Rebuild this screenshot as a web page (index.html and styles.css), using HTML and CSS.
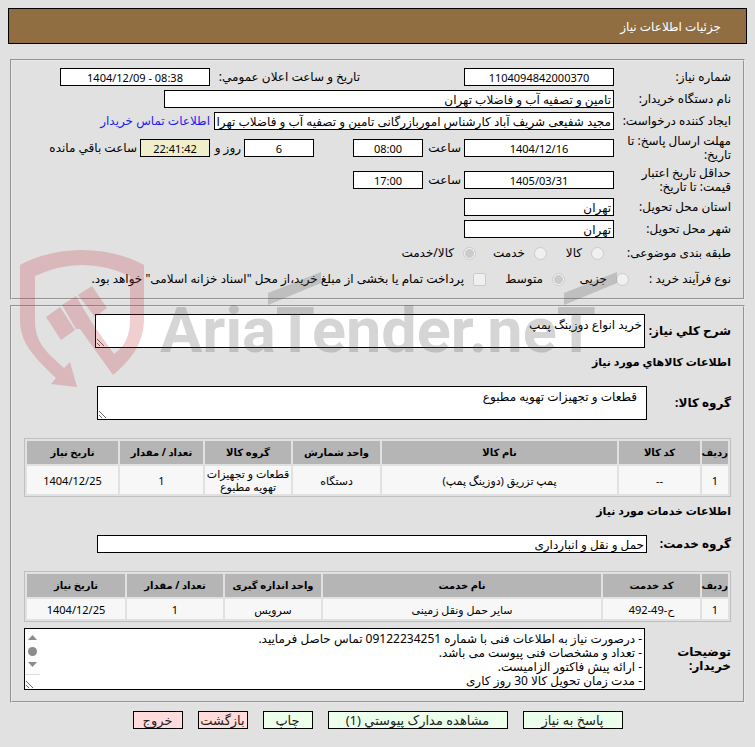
FILE: index.html
```html
<!DOCTYPE html>
<html lang="fa" dir="rtl">
<head>
<meta charset="utf-8">
<title>جزئیات اطلاعات نیاز</title>
<link rel="stylesheet" href="styles.css">
</head>
<body>
<header class="title-bar">جزئیات اطلاعات نیاز</header>
<form>
<fieldset class="panel">
  <div class="row">
    <label class="label" for="num">شماره نیاز:</label>
    <input class="field mid" id="num" value="1104094842000370" readonly>
    <label class="label second" for="announce">تاریخ و ساعت اعلان عمومي:</label>
    <input class="field mid" id="announce" value="1404/12/09 - 08:38" dir="ltr" readonly>
  </div>
  <div class="row">
    <label class="label" for="org">نام دستگاه خریدار:</label>
    <input class="field org" id="org" value="تامین و تصفیه آب و فاضلاب تهران" readonly>
  </div>
  <div class="row">
    <label class="label" for="creator">ایجاد کننده درخواست:</label>
    <input class="field creator" id="creator" value="مجید شفیعی شریف آباد کارشناس اموربازرگانی تامین و تصفیه آب و فاضلاب تهران" readonly>
    <a class="contact" href="#contact">اطلاعات تماس خریدار</a>
  </div>
  <div class="row tall">
    <label class="label" for="deadline">مهلت ارسال پاسخ: تا تاریخ:</label>
    <input class="field mid" id="deadline" value="1404/12/16" readonly>
    <label class="unit hour" for="dhour">ساعت</label>
    <input class="field short" id="dhour" value="08:00" readonly>
    <input class="field short days" id="days" value="6" readonly>
    <label class="unit day" for="days">روز و</label>
    <input class="field short timer" id="timer" value="22:41:42" readonly>
    <label class="unit" for="timer">ساعت باقي مانده</label>
  </div>
  <div class="row tall">
    <label class="label" for="valid">حداقل تاریخ اعتبار قیمت: تا تاریخ:</label>
    <input class="field mid" id="valid" value="1405/03/31" readonly>
    <label class="unit hour" for="vhour">ساعت</label>
    <input class="field short" id="vhour" value="17:00" readonly>
  </div>
  <div class="row">
    <label class="label" for="province">استان محل تحویل:</label>
    <input class="field place" id="province" value="تهران" readonly>
  </div>
  <div class="row">
    <label class="label" for="city">شهر محل تحویل:</label>
    <input class="field place" id="city" value="تهران" readonly>
  </div>
  <div class="row options subject">
    <span class="caption">طبقه بندی موضوعی:</span>
    <label class="option"><input type="radio" name="subject" disabled>کالا</label>
    <label class="option"><input type="radio" name="subject" disabled>خدمت</label>
    <label class="option"><input type="radio" name="subject" checked disabled>کالا/خدمت</label>
  </div>
  <div class="row options process">
    <span class="caption">نوع فرآیند خرید :</span>
    <label class="option"><input type="radio" name="process" disabled>جزیی</label>
    <label class="option"><input type="radio" name="process" checked disabled>متوسط</label>
    <label class="option"><input type="checkbox" disabled>پرداخت تمام یا بخشی از مبلغ خرید،از محل "اسناد خزانه اسلامی" خواهد بود.</label>
  </div>
</fieldset>

<fieldset class="panel details">
  <div class="block">
    <label class="strong" for="desc">شرح کلي نیاز:</label>
    <textarea class="area" id="desc" readonly>خرید انواع دوزینگ پمپ</textarea>
  </div>
  <h2 class="strong heading">اطلاعات کالاهاي مورد نیاز</h2>
  <div class="block group">
    <label class="strong" for="goods">گروه کالا:</label>
    <textarea class="area inset" id="goods" readonly>قطعات و تجهیزات تهویه مطبوع</textarea>
  </div>
  <table class="grid">
    <colgroup><col class="c-row"><col class="c-code"><col><col class="c-unit"><col class="c-group"><col class="c-count"><col class="c-date"></colgroup>
    <thead><tr><th>ردیف</th><th>کد کالا</th><th>نام کالا</th><th>واحد شمارش</th><th>گروه کالا</th><th>تعداد / مقدار</th><th>تاریخ نیاز</th></tr></thead>
    <tbody><tr class="double"><td>1</td><td>--</td><td>پمپ تزریق (دوزینگ پمپ)</td><td>دستگاه</td><td>قطعات و تجهیزات تهویه مطبوع</td><td>1</td><td>1404/12/25</td></tr></tbody>
  </table>
  <h2 class="strong heading services">اطلاعات خدمات مورد نیاز</h2>
  <div class="block service">
    <label class="strong" for="service">گروه خدمت:</label>
    <input class="field inset" id="service" value="حمل و نقل و انبارداری" readonly>
  </div>
  <table class="grid">
    <colgroup><col class="c-row"><col class="c-scode"><col><col class="c-sunit"><col class="c-sunit"><col class="c-sdate"></colgroup>
    <thead><tr><th>ردیف</th><th>کد خدمت</th><th>نام خدمت</th><th>واحد اندازه گیری</th><th>تعداد / مقدار</th><th>تاریخ نیاز</th></tr></thead>
    <tbody><tr><td>1</td><td>ح-49-492</td><td>سایر حمل ونقل زمینی</td><td>سرویس</td><td>1</td><td>1404/12/25</td></tr></tbody>
  </table>
  <div class="block notes">
    <label class="strong" for="notes">توضیحات خریدار:</label>
    <div class="notes-box">
      <textarea class="area" id="notes" readonly>- درصورت نیاز به اطلاعات فنی با شماره 09122234251 تماس حاصل فرمایید.
- تعداد و مشخصات فنی پیوست می باشد.
- ارائه پیش فاکتور الزامیست.
- مدت زمان تحویل کالا 30 روز کاری</textarea>
      <svg class="scroller" viewBox="0 0 15 46" aria-hidden="true">
        <path fill="#fcfcfc" d="M0 0h15v46H0z"/>
        <path fill="#8b8b8b" d="M3 11h9L7.500 6zM3 33h9l-4.500 5z"/>
        <circle cx="7.500" cy="22.500" r="4.500" fill="#8b8b8b"/>
        <path fill="#dcdcdc" d="M0 45h15v1H0z"/>
      </svg>
    </div>
  </div>
</fieldset>

<div class="actions">
  <button type="button" class="btn reply">پاسخ به نیاز</button>
  <button type="button" class="btn docs">مشاهده مدارک پیوستي (1)</button>
  <button type="button" class="btn">چاپ</button>
  <button type="button" class="btn red">بازگشت</button>
  <button type="button" class="btn red">خروج</button>
</div>
</form>

<svg class="watermark" viewBox="0 0 620 145" direction="ltr" aria-hidden="true">
  <g fill="#be2832" opacity=".22">
    <path d="M20 20Q48 5 82 5T144 20V73C144 98 132 114 113 130L80 84H76L62 60L76 51L92 78L114 109C124 102 130 92 130 75V31Q82 9 35 31V78C36 98 46 107 64 123L70 117L77 142L51 139L56 133C34 112 20 98 20 75Z"/>
    <path d="M46 72L60 62L75 85L61 95ZM78 50L92 41L107 63L95 72Z"/>
  </g>
  <g class="wordmark">
    <path d="M268 48L321 27V38L268 60ZM564 48L617 27V38L564 60Z"/>
    <text x="160" y="107">AriaTender.neT</text>
  </g>
</svg>
</body>
</html>
```
FILE: styles.css
```css
* { box-sizing: border-box; }

body {
  margin: 8px;
  position: relative;
  background: #e1e1e1;
  color: #000;
  font: 12px/14px "Noto Sans", "DejaVu Sans", sans-serif;
}

input, textarea, button { font: inherit; color: inherit; margin: 0; }

.title-bar {
  height: 36px;
  border: 1px solid #000;
  background: #906e41;
  color: #fff;
  padding: 0 25px;
  line-height: 36px;
}

.panel {
  margin: 15px 2px 0;
  padding: 5px 12px 6px;
  border: 2px groove #e8e8e8;
  min-width: 0;
}

.row { display: flex; align-items: center; height: 22px; white-space: nowrap; }
.row.tall { height: 32px; }
.label { width: 117px; flex: none; white-space: normal; }
.label.second { width: 150px; margin-right: 104px; white-space: nowrap; }

.field {
  height: 18px;
  border: 1px solid #000;
  background: #fff;
  padding: 0 2px;
  border-radius: 0;
  flex: none;
}
.mid { width: 150px; text-align: center; font-size: 11px; }
.short { width: 70px; text-align: center; font-size: 11px; }
.place { width: 150px; }
.org { width: 450px; }
.creator { width: 400px; }
.days { margin-right: 39px; }
.timer { background: #f0eecb; }
.unit { margin: 0 3px; }
.unit.hour { width: 35px; }
.unit.day { width: 28px; }
.contact { color: #1f1fe6; text-decoration: none; margin-right: 4px; }

.options { height: 26px; display: grid; justify-content: start; }
.subject { grid-template-columns: 127px 57px 71px auto; }
.process { grid-template-columns: 102px 64px 79px auto; }
.option { display: flex; align-items: center; gap: 9px; }
.option input {
  appearance: none;
  width: 13px;
  height: 13px;
  flex: none;
  border: 1px solid #cbcbcb;
  background: #f0f0f0;
  border-radius: 2px;
}
.option input[type="radio"] { border-radius: 50%; }
.option input[type="radio"]:checked {
  background: radial-gradient(circle, #cbcbcb 0 4px, #f0f0f0 5px);
}

.details { margin-top: 5px; padding: 7px 12px 11px; }
.strong { font-weight: bold; font-size: 11px; line-height: 14px; margin: 0; }
.block { display: flex; align-items: center; justify-content: space-between; }
.block .strong { width: 84px; font-size: 12px; }
.area {
  display: block;
  width: 550px;
  height: 34px;
  border: 1px solid #000;
  border-radius: 0;
  background: #fff;
  padding: 3px 2px;
  resize: both;
  overflow: hidden;
}
.block > .area { margin-left: 71px; }
.block > .inset { margin-left: 73px; width: 550px; }
.area.inset { padding-right: 9px; }
.heading { padding-top: 7px; }
.group { margin-top: 17px; }
.services { padding-top: 0; margin-top: 7px; }
.service { margin: 17px 0 18px; }

.grid {
  width: 100%;
  table-layout: fixed;
  border: 1px solid #bfbfbf;
  border-spacing: 2px;
  line-height: 13px;
  text-align: center;
}
.group + .grid { margin-top: 18px; }
.grid th { height: 23px; padding: 0; background: #b5b5b5; white-space: nowrap; font-size: 10px; }
.grid td { height: 20px; padding: 0; background: #f7f7f7; font-size: 11px; }
.grid .double td { height: 28px; }
.c-row { width: 26px; }
.c-code { width: 81px; }
.c-unit { width: 87px; }
.c-group { width: 86px; }
.c-count { width: 83px; }
.c-date { width: 91px; }
.c-scode { width: 97px; }
.c-sunit { width: 96px; }
.c-sdate { width: 98px; }

.notes { margin-top: 6px; }
.notes-box { position: relative; flex: 0 0 621px; }
.notes-box .area { width: 100%; height: 62px; padding: 3px 2px 2px; }
.scroller { position: absolute; left: 1px; top: 1px; width: 15px; height: 46px; }

.actions { display: flex; justify-content: center; gap: 15px; margin-top: 8px; }
.btn {
  width: 50px;
  height: 18px;
  padding: 0;
  border: 1px solid #000;
  background: #ebffeb;
  color: #222;
  font-size: 13px;
  white-space: nowrap;
}
.reply { width: 100px; }
.docs { width: 180px; }
.red { background: #ffdcdc; }

.watermark {
  position: absolute;
  left: -8px;
  top: 237px;
  width: 620px;
  height: 145px;
  overflow: visible;
  pointer-events: none;
}
.wordmark {
  fill: #505050;
  opacity: .23;
  font: bold 63px Roboto, "Liberation Sans", sans-serif;
}
```
